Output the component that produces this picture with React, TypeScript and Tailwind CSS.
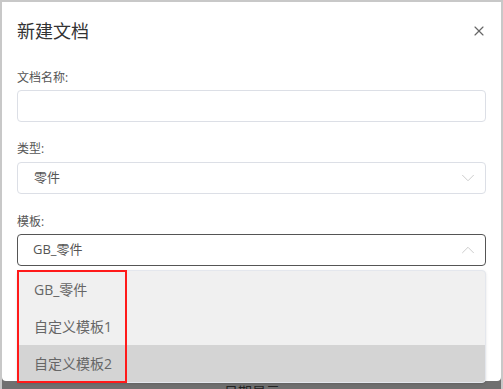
import { ChevronDown, ChevronUp, X } from 'lucide-react'

const FONT = { fontFamily: '"Open Sans", "Noto Sans CJK SC", sans-serif' }

const OPTIONS = ['GB_零件', '自定义模板1', '自定义模板2']

function Label({ text }: { text: string }) {
  return <div className="text-[12px] leading-[16px] text-[#555] h-[16px]">{text}</div>
}

export default function App() {
  return (
    <div
      className="relative w-[503px] h-[389px] overflow-hidden bg-[#707070] border-t-2 border-x-2 border-[#c8c8c8]"
      style={FONT}
    >
      <div className="relative bg-white h-[379px] rounded-b-[4px] px-[15px]">
        <div className="flex items-center justify-between h-[24px] pt-[17px] box-content">
          <h1 className="text-[18px] leading-[24px] text-[#333] font-normal">新建文档</h1>
          <X className="w-[16px] h-[16px] text-[#666] -mr-[1px]" strokeWidth={1.75} />
        </div>

        <div className="mt-[27px]">
          <Label text="文档名称:" />
          <div className="mt-[4px] h-[32px] rounded-[4px] border border-[#dcdfe6]" />
        </div>

        <div className="mt-[19px]">
          <Label text="类型:" />
          <div className="mt-[5px] h-[32px] rounded-[4px] border border-[#dcdfe6] flex items-center justify-between pl-[16px] pr-[6px]">
            <span className="text-[13px] text-[#555]">零件</span>
            <ChevronDown className="w-[22px] h-[22px] text-[#c8c8c8]" strokeWidth={1} />
          </div>
        </div>

        <div className="mt-[20px]">
          <Label text="模板:" />
          <div className="mt-[4px] h-[32px] rounded-[4px] border border-[#555] flex items-center justify-between pl-[15px] pr-[6px]">
            <span className="text-[13px] text-[#555]">GB_零件</span>
            <ChevronUp className="w-[22px] h-[22px] text-[#c8c8c8]" strokeWidth={1} />
          </div>
        </div>
      </div>

      <div className="absolute left-[15px] top-[268px] w-[469px] rounded-[4px] border border-[#e4e7ed] bg-[#f0f0f0] overflow-hidden shadow-sm">
        {OPTIONS.map((o, i) => (
          <div
            key={o}
            className={`h-[37px] flex items-center pl-[16px] text-[14px] text-[#666] ${
              i === 2 ? 'bg-[#d4d4d4]' : ''
            }`}
          >
            {o}
          </div>
        ))}
      </div>

      <div className="absolute left-[15px] top-[268px] w-[110px] h-[113px] border-2 border-[#ff1a1a]" />

      <div className="absolute left-[222px] top-[382px] text-[14px] leading-[16px] text-[#222]">日期显示</div>
    </div>
  )
}
